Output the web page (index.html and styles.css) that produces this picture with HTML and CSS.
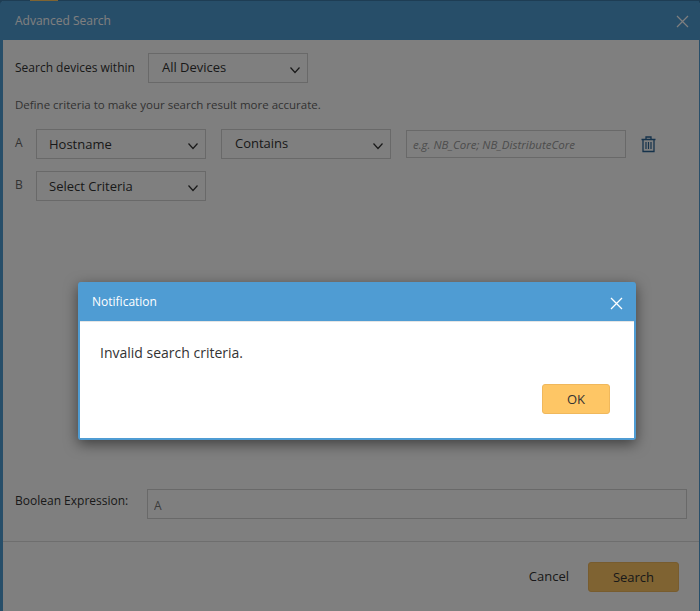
FILE: index.html
```html
<!DOCTYPE html>
<html>
<head>
    <title>Advanced Search</title>
    <link rel="stylesheet" href="styles.css">
</head>
<body>
    <div class="top-strip"><span class="top-tab"></span></div>

    <div class="search-dialog">
        <div class="search-header">
            <span class="search-title">Advanced Search</span>
            <svg class="close-icon" width="13" height="13" viewBox="0 0 13 13"><path d="M1 1L12 12M12 1L1 12" stroke="#fff" stroke-width="1.2" fill="none"/></svg>
        </div>

        <div class="search-body">
            <div class="scope-row">
                <span class="scope-label">Search devices within</span>
                <div class="select scope-select">
                    <span class="select-text">All Devices</span>
                    <svg class="chevron" width="12" height="8" viewBox="0 0 12 8"><path d="M1.5 1.5L6 6.5L10.5 1.5" stroke="#333" stroke-width="1.2" fill="none"/></svg>
                </div>
            </div>

            <p class="hint">Define criteria to make your search result more accurate.</p>

            <div class="criteria-row">
                <span class="row-letter">A</span>
                <div class="select criteria-select">
                    <span>Hostname</span>
                    <svg class="chevron" width="12" height="8" viewBox="0 0 12 8"><path d="M1.5 1.5L6 6.5L10.5 1.5" stroke="#333" stroke-width="1.2" fill="none"/></svg>
                </div>
                <div class="select criteria-select operator-select">
                    <span class="select-text">Contains</span>
                    <svg class="chevron" width="12" height="8" viewBox="0 0 12 8"><path d="M1.5 1.5L6 6.5L10.5 1.5" stroke="#333" stroke-width="1.2" fill="none"/></svg>
                </div>
                <input class="value-input" type="text" placeholder="e.g. NB_Core; NB_DistributeCore">
                <svg class="trash-icon" width="15" height="17" viewBox="0 0 15 17">
                    <path d="M0.5 3.5H14.5M5 3.5V1H10V3.5M2 3.5V15.5H13V3.5" stroke="#2a6496" stroke-width="1.3" fill="none"/>
                    <path d="M5 6V13M7.5 6V13M10 6V13" stroke="#2a6496" stroke-width="1.2" fill="none"/>
                </svg>
            </div>

            <div class="criteria-row second-row">
                <span class="row-letter">B</span>
                <div class="select criteria-select">
                    <span>Select Criteria</span>
                    <svg class="chevron" width="12" height="8" viewBox="0 0 12 8"><path d="M1.5 1.5L6 6.5L10.5 1.5" stroke="#333" stroke-width="1.2" fill="none"/></svg>
                </div>
            </div>

            <div class="boolean-row">
                <label class="boolean-label" for="boolean">Boolean Expression:</label>
                <input class="boolean-input" id="boolean" type="text" value="A">
            </div>
        </div>

        <div class="search-footer">
            <span class="cancel-link">Cancel</span>
            <button class="primary-button search-button">Search</button>
        </div>
    </div>

    <div class="backdrop"></div>

    <div class="notification">
        <div class="notification-header">
            <span>Notification</span>
            <svg class="notification-close" width="13" height="13" viewBox="0 0 13 13"><path d="M1 1L12 12M12 1L1 12" stroke="#fff" stroke-width="1.3" fill="none"/></svg>
        </div>
        <div class="notification-body">
            <p class="notification-text">Invalid search criteria.</p>
            <div class="notification-actions">
                <button class="primary-button ok-button">OK</button>
            </div>
        </div>
    </div>
</body>
</html>
```

FILE: styles.css
```css
body {
    font-family: "Open Sans", "Noto Sans", sans-serif;
    font-size: 13px;
    color: #333;
    background-color: #3d7ba8;
    margin: 0;
    padding: 0;
    height: 611px;
    overflow: hidden;
    display: flex;
    flex-direction: column;
}

.top-strip {
    height: 1px;
    padding-left: 30px;
    flex-shrink: 0;
}

.top-tab {
    display: block;
    width: 28px;
    height: 1px;
    background-color: #fec965;
}

.search-dialog {
    flex: 1;
    display: flex;
    flex-direction: column;
    background-color: #fff;
    border-left: 3px solid #4f9cd3;
    border-right: 1px solid #4f9cd3;
    border-radius: 4px 4px 0 0;
}

.search-header {
    height: 39px;
    display: flex;
    align-items: center;
    justify-content: space-between;
    background-color: #4f9cd3;
    color: #fff;
    font-size: 12px;
    padding: 0 10px 0 12px;
    flex-shrink: 0;
}

.search-title {
    margin-top: -1px;
}

.close-icon {
    margin-top: 1px;
}

.search-body {
    flex: 1;
    display: flex;
    flex-direction: column;
    padding: 13px 12px 0 12px;
}

.scope-row {
    display: flex;
    align-items: center;
    gap: 13px;
}

.scope-label {
    margin-top: -2px;
    font-size: 12px;
}

.select {
    box-sizing: border-box;
    height: 30px;
    border: 1px solid #d2d2d2;
    display: flex;
    align-items: center;
    justify-content: space-between;
    font-size: 13px;
}

.select-text {
    margin-top: -2px;
}

.scope-select {
    width: 160px;
    padding: 0 6px 0 13px;
}

.chevron {
    margin-top: 3px;
}

.hint {
    margin: 13px 0 16px;
    font-size: 11.5px;
    line-height: 17px;
    color: #666;
}

.criteria-row {
    display: flex;
    align-items: center;
    height: 30px;
}

.second-row {
    margin-top: 12px;
}

.row-letter {
    width: 21px;
    margin-top: -3px;
    font-size: 12px;
    color: #666;
}

.criteria-select {
    width: 170px;
    padding: 0 6px 0 12px;
}

.operator-select {
    margin-left: 15px;
    padding-left: 13px;
}

.value-input {
    box-sizing: border-box;
    width: 220px;
    height: 28px;
    margin-left: 15px;
    padding: 0 6px;
    border: 1px solid #d2d2d2;
    font-family: "Open Sans", sans-serif;
    font-size: 11.5px;
    font-style: italic;
    outline: none;
}

.value-input::placeholder {
    color: #999;
}

.trash-icon {
    margin-left: 15px;
}

.boolean-row {
    display: flex;
    align-items: center;
    margin-top: auto;
    margin-bottom: 22px;
}

.boolean-label {
    width: 132px;
    margin-top: -7px;
    font-size: 12px;
    white-space: nowrap;
}

.boolean-input {
    box-sizing: border-box;
    width: 540px;
    height: 30px;
    padding: 2px 6px 0;
    border: 1px solid #d2d2d2;
    font-family: "Open Sans", sans-serif;
    font-size: 12px;
    color: #777;
    outline: none;
}

.search-footer {
    height: 70px;
    box-sizing: border-box;
    border-top: 1px solid #ddd;
    display: flex;
    align-items: flex-start;
    justify-content: flex-end;
    padding: 20px 20px 0 0;
    gap: 19px;
    flex-shrink: 0;
}

.cancel-link {
    line-height: 29px;
}

.primary-button {
    font-family: "Open Sans", sans-serif;
    font-size: 13px;
    color: #333;
    background-color: #fec665;
    border: 1px solid #f0b85c;
    border-radius: 3px;
    padding: 0;
    cursor: pointer;
}

.search-button {
    width: 91px;
    height: 30px;
}

.backdrop {
    position: absolute;
    top: 0;
    left: 0;
    right: 0;
    bottom: 0;
    background-color: rgba(0, 0, 0, 0.5);
}

.notification {
    position: absolute;
    top: 282px;
    left: 78px;
    width: 558px;
    box-sizing: border-box;
    border: 2px solid #4f9cd3;
    border-top: none;
    border-radius: 3px;
    background-color: #4f9cd3;
    box-shadow: 0 4px 14px rgba(0, 0, 0, 0.5);
}

.notification-header {
    height: 39px;
    display: flex;
    align-items: center;
    justify-content: space-between;
    color: #fff;
    font-size: 12px;
    padding: 0 11px 0 12px;
}

.notification-close {
    margin-top: 3px;
}

.notification-body {
    background-color: #fff;
    border-top: 1px solid #e5e5e5;
    height: 117px;
    box-sizing: border-box;
    padding: 21px 24px 0 20px;
}

.notification-text {
    margin: 0;
    font-size: 14px;
    line-height: 20px;
    color: #333;
}

.notification-actions {
    display: flex;
    justify-content: flex-end;
    margin-top: 21px;
}

.ok-button {
    width: 68px;
    height: 30px;
}
```
